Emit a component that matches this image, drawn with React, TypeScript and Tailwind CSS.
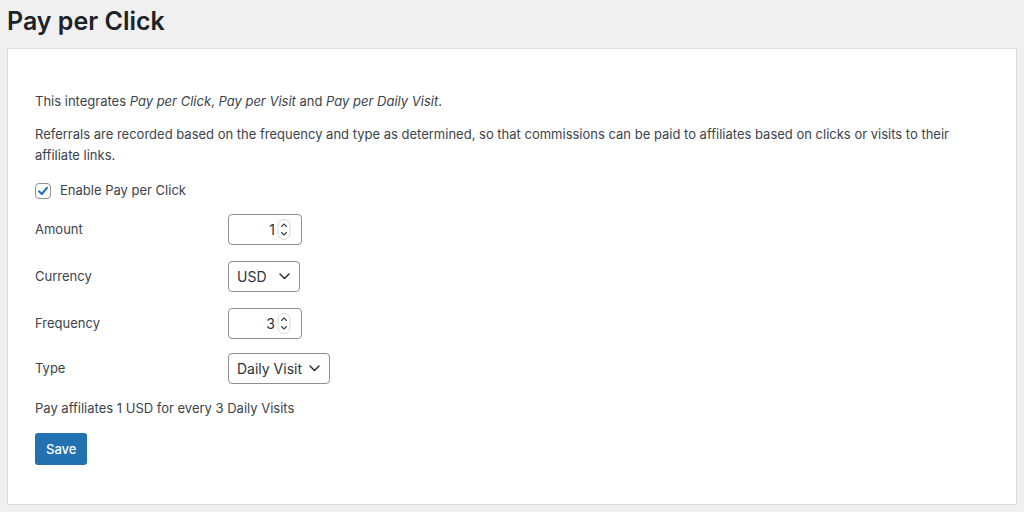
import React from "react"

const font = { fontFamily: "Inter, 'Liberation Sans', Arial, sans-serif" }

function Spinner() {
  return (
    <svg width="14" height="21" viewBox="0 0 14 21" className="shrink-0">
      <rect x="1" y="0.5" width="12" height="20" rx="6" fill="#fff" stroke="#d7d7d9" />
      <path d="M4.5 7.5 L7 5 L9.5 7.5" fill="none" stroke="#3c434a" strokeWidth="1.1" strokeLinecap="round" strokeLinejoin="round" />
      <path d="M4.5 13.5 L7 16 L9.5 13.5" fill="none" stroke="#3c434a" strokeWidth="1.1" strokeLinecap="round" strokeLinejoin="round" />
    </svg>
  )
}

function Chevron() {
  return (
    <svg width="11" height="7" viewBox="0 0 11 7" className="shrink-0">
      <path d="M1 1 L5.5 5.5 L10 1" fill="none" stroke="#2c3338" strokeWidth="1.5" strokeLinecap="round" strokeLinejoin="round" />
    </svg>
  )
}

function NumberField({ value }: { value: string }) {
  return (
    <div className="w-[74px] h-[31px] border border-[#8c8f94] rounded-[4px] bg-white flex items-center justify-end pr-[10px] gap-[2px] text-[14px] text-[#2c3338]">
      <span>{value}</span>
      <Spinner />
    </div>
  )
}

function SelectField({ value, width }: { value: string; width: string }) {
  return (
    <div className={`${width} h-[31px] border border-[#8c8f94] rounded-[4px] bg-white flex items-center justify-between pl-[8px] pr-[9px] text-[14px] text-[#2c3338]`}>
      <span>{value}</span>
      <Chevron />
    </div>
  )
}

function Row({ label, className, children }: { label: string; className: string; children: React.ReactNode }) {
  return (
    <div className={`flex items-center h-[31px] ${className}`}>
      <div className="w-[193px]">{label}</div>
      {children}
    </div>
  )
}

export default function App() {
  return (
    <div className="w-[1024px] h-[512px] bg-[#f0f0f1] overflow-hidden" style={font}>
      {/* Title */}
      <h1 className="h-[48px] pt-[5px] pl-[7px] text-[25px] leading-[32px] font-semibold text-[#1d2327]">
        Pay per Click
      </h1>

      {/* Panel */}
      <div className="mx-[7px] w-[1010px] h-[457px] bg-white border border-[#dcdcde] pt-[42px] px-[27px] text-[13px] leading-[21px] text-[#3c434a]">
        <p>
          This integrates <em>Pay per Click</em>, <em>Pay per Visit</em> and <em>Pay per Daily Visit</em>.
        </p>
        <p className="mt-[12px]">
          Referrals are recorded based on the frequency and type as determined, so that commissions can be paid to affiliates based on clicks or visits to their affiliate links.
        </p>

        <label className="mt-[14px] flex items-center h-[21px]">
          <span className="w-[16px] h-[16px] border border-[#8c8f94] rounded-[4px] flex items-center justify-center bg-white">
            <svg width="12" height="12" viewBox="0 0 12 12">
              <path d="M2 6.3 L4.8 9 L10 2.8" fill="none" stroke="#2271b1" strokeWidth="2" strokeLinecap="round" strokeLinejoin="round" />
            </svg>
          </span>
          <span className="ml-[9px]">Enable Pay per Click</span>
        </label>

        <Row label="Amount" className="mt-[13px]">
          <NumberField value="1" />
        </Row>
        <Row label="Currency" className="mt-[16px]">
          <SelectField value="USD" width="w-[72px]" />
        </Row>
        <Row label="Frequency" className="mt-[16px]">
          <NumberField value="3" />
        </Row>
        <Row label="Type" className="mt-[14px]">
          <SelectField value="Daily Visit" width="w-[102px]" />
        </Row>

        <p className="mt-[14px]">Pay affiliates 1 USD for every 3 Daily Visits</p>

        <button className="mt-[14px] h-[32px] px-[11px] rounded-[3px] bg-[#2271b1] text-white text-[13px] font-medium">
          Save
        </button>
      </div>
    </div>
  )
}
